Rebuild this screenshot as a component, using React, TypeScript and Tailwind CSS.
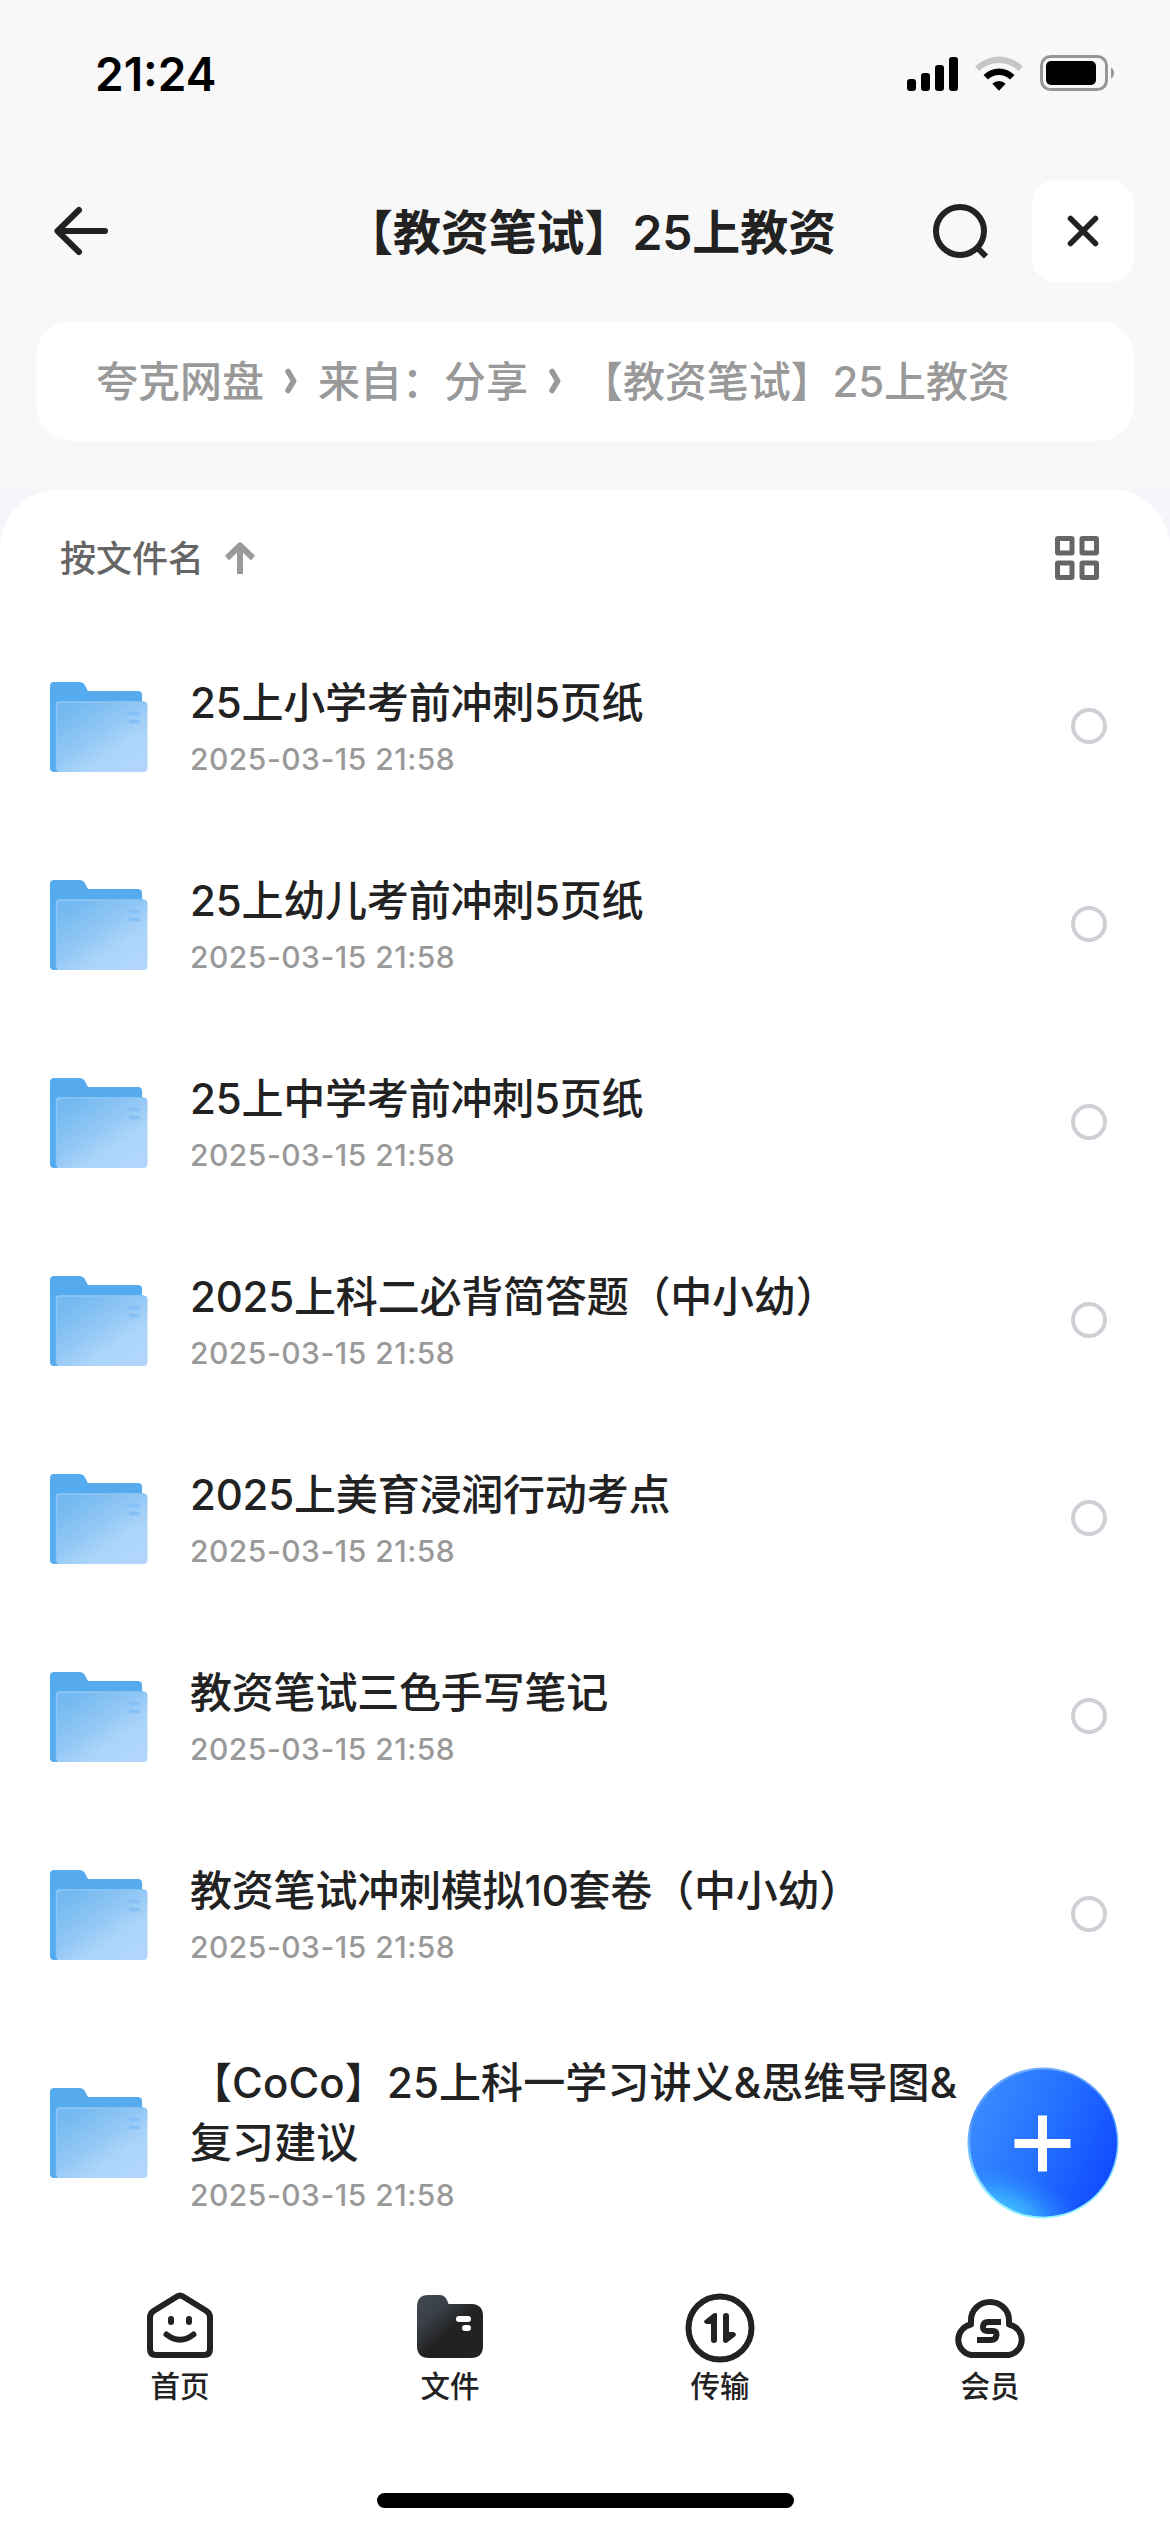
import type { ReactNode } from 'react';

const files = [
  { name: '25上小学考前冲刺5页纸', date: '2025-03-15 21:58' },
  { name: '25上幼儿考前冲刺5页纸', date: '2025-03-15 21:58' },
  { name: '25上中学考前冲刺5页纸', date: '2025-03-15 21:58' },
  { name: '2025上科二必背简答题（中小幼）', date: '2025-03-15 21:58' },
  { name: '2025上美育浸润行动考点', date: '2025-03-15 21:58' },
  { name: '教资笔试三色手写笔记', date: '2025-03-15 21:58' },
  { name: '教资笔试冲刺模拟10套卷（中小幼）', date: '2025-03-15 21:58' },
  { name: '【CoCo】25上科一学习讲义&思维导图&复习建议', date: '2025-03-15 21:58', tall: true },
];

function StatusBar() {
  return (
    <div className="flex h-[150px] items-start justify-between pt-[46px] pl-[95px] pr-[54px]">
      <span className="text-[46px] leading-[56px] font-semibold text-black">21:24</span>
      <div className="flex items-center pt-[9px]">
        <svg width="51" height="36" viewBox="0 0 51 36">
          <rect x="0" y="24" width="9" height="12" rx="3" />
          <rect x="14" y="18" width="9" height="18" rx="3" />
          <rect x="28" y="10" width="9" height="26" rx="3" />
          <rect x="42" y="2" width="9" height="34" rx="3" />
        </svg>
        <svg className="ml-[17px]" width="48" height="36" viewBox="0 0 48 36">
          <path d="M0 11.5 A34 34 0 0 1 48 11.5 L43.5 16 A27.5 27.5 0 0 0 4.5 16 Z" fill="#c6c6c6" />
          <path d="M8.5 20 A22 22 0 0 1 39.5 20 L35 24.5 A15.7 15.7 0 0 0 13 24.5 Z" />
          <path d="M17.3 28.7 A9.5 9.5 0 0 1 30.7 28.7 L24 35.7 Z" />
        </svg>
        <svg className="ml-[17px]" width="76" height="36" viewBox="0 0 76 36">
          <rect x="1.5" y="1.5" width="65" height="33" rx="9" fill="none" stroke="#979797" strokeWidth="3" />
          <rect x="6" y="6" width="50" height="24" rx="5" />
          <path d="M71 12.5 a6.5 6.5 0 0 1 0 11 Z" fill="#979797" />
        </svg>
      </div>
    </div>
  );
}

function Header() {
  return (
    <header className="flex h-[162px] items-center pl-[51px] pr-[36px]">
      <svg width="60" height="60" viewBox="0 0 60 60" fill="none" stroke="#222" strokeWidth="6" strokeLinecap="round" strokeLinejoin="round">
        <path d="M54 30 H7 M28 9 L6.5 30 L28 51" />
      </svg>
      <h1 className="ml-[234px] w-[520px] pt-[3px] text-[48px] leading-[60px] font-semibold tracking-[-0.1px] whitespace-nowrap text-[#222]">
        【教资笔试】25上教资
      </h1>
      <svg className="ml-[62px]" width="66" height="66" viewBox="0 0 66 66" fill="none" stroke="#222" strokeWidth="6">
        <circle cx="33" cy="33" r="24" />
        <path d="M50 49.5 L59 58.5" />
      </svg>
      <button className="ml-auto flex h-[102px] w-[102px] items-center justify-center rounded-[24px] bg-white">
        <svg width="36" height="36" viewBox="0 0 36 36" stroke="#222" strokeWidth="5.5" strokeLinecap="round">
          <path d="M5.500 5.500 L30.500 30.500 M30.500 5.500 L5.500 30.500" />
        </svg>
      </button>
    </header>
  );
}

function Chevron({ className }: { className: string }) {
  return (
    <svg className={className} width="12" height="26" viewBox="0 0 12 26" fill="none" stroke="#999" strokeWidth="5.5" strokeLinecap="round" strokeLinejoin="round">
      <path d="M3 3.5 L8.7 13 L3 22.5" />
    </svg>
  );
}

function Breadcrumb() {
  return (
    <nav className="mx-[36px] mt-[9px] flex h-[120px] items-center rounded-[36px] bg-white pl-[60px] text-[42px] leading-[60px] font-medium whitespace-nowrap text-[#999]">
      <span className="pt-[2px]">夸克网盘</span>
      <Chevron className="ml-[21px]" />
      <span className="ml-[21px] pt-[2px]">来自：分享</span>
      <Chevron className="ml-[21px]" />
      <span className="ml-[20px] pt-[2px] tracking-[-0.1px]">【教资笔试】25上教资</span>
    </nav>
  );
}

function FolderIcon() {
  return (
    <svg className="shrink-0" width="98" height="90" viewBox="0 0 98 90">
      <defs>
        <linearGradient id="front" x1="0.15" y1="0.1" x2="0.85" y2="0.9">
          <stop offset="0" stopColor="#74b9f0" />
          <stop offset="0.45" stopColor="#93c8f5" />
          <stop offset="0.75" stopColor="#add5fa" />
          <stop offset="1" stopColor="#b0d6fb" />
        </linearGradient>
      </defs>
      <path d="M0 4 Q0 0 4 0 H30 Q33 0 34.5 2.5 L38 9 H88 Q92 9 92 13 V50 H8 V90 H4 Q0 90 0 86 Z" fill="#55abee" />
      <rect x="6" y="19.5" width="91.5" height="70.5" rx="4" fill="url(#front)" />
      <path d="M6.5 88 V23 Q6.5 20 9.5 20 H94" fill="none" stroke="#8dc6f5" strokeWidth="1.5" />
      <path d="M79 31.5 H89.5 M79 39.5 H89.5" stroke="#84c0f6" strokeWidth="3.5" />
    </svg>
  );
}

function FileRow({ name, date, tall }: { name: string; date: string; tall?: boolean }) {
  return (
    <li className={tall ? 'flex h-[238px] items-center pl-[50px] pr-[63px]' : 'flex h-[198px] items-center pl-[50px] pr-[63px]'}>
      <FolderIcon />
      <div className={tall ? 'ml-[42px] w-[780px] pt-[3px]' : 'ml-[42px] w-[780px]'}>
        <p className={tall ? 'text-[42px] leading-[60px] font-medium tracking-[0.1px] text-[#222]' : 'text-[42px] leading-[60px] font-medium tracking-[-0.2px] text-[#222]'}>
          {name}
        </p>
        <p className={tall ? 'text-[30px] leading-[44px] font-medium tracking-[0.5px] text-[#999]' : 'mt-[4px] text-[30px] leading-[44px] font-medium tracking-[0.5px] text-[#999]'}>
          {date}
        </p>
      </div>
      <span className="mb-[2px] ml-auto h-[36px] w-[36px] rounded-full border-4 border-[#d0cfd6]" />
    </li>
  );
}

function Tab({ label, children }: { label: string; children: ReactNode }) {
  return (
    <div className="flex w-[270px] flex-col items-center">
      <svg width="72" height="72" viewBox="0 0 72 72" fill="none" stroke="#222" strokeWidth="6" strokeLinecap="round" strokeLinejoin="round">
        {children}
      </svg>
      <span className="mt-[1px] text-[29.5px] leading-[44px] font-medium text-[#222]">{label}</span>
    </div>
  );
}

function TabBar() {
  return (
    <nav className="flex px-[45px] pt-[3px]">
      <Tab label="首页">
        <path d="M33 5.5 Q36 3.5 39 5.5 L62.5 20 Q66 22.3 66 26.500 V58 Q66 64 60 64 H12 Q6 64 6 58 V26.500 Q6 22.300 9.500 20 Z" />
        <path d="M27 28 V31 M45 28 V31 M22.500 43.500 Q36 54 49.500 43.500" />
      </Tab>
      <Tab label="文件">
        <defs>
          <linearGradient id="tab-folder" gradientUnits="userSpaceOnUse" x1="10" y1="10" x2="36" y2="40">
            <stop offset="0" stopColor="#3f4650" />
            <stop offset="0.4" stopColor="#3a4048" />
            <stop offset="1" stopColor="#222" />
          </linearGradient>
        </defs>
        <path d="M3 16 Q3 4 14 4 H26 Q32 4 34.500 13 H58 Q69 13.500 69 25 V55 Q69 67 57 67 H15 Q3 67 3 55 Z" fill="url(#tab-folder)" stroke="none" />
        <path d="M45 28 H54 M51 37 H54" stroke="#fff" />
      </Tab>
      <Tab label="传输">
        <circle cx="36" cy="37" r="31.5" />
        <path d="M27.500 24 Q30 21 33 22.500 V49 Q33 52 30 52 Q27 52 27 49 V33 H22.500 Q19 31.500 20.500 29.500 Z" fill="#222" stroke="none" />
        <path d="M39 25 Q39 22 42 22 Q45 22 45 25 V41 H49.500 Q53 42.500 51.500 45 L43 51.500 Q40 53 39 50 Z" fill="#222" stroke="none" />
      </Tab>
      <Tab label="会员">
        <path d="M17 33.500 V29 A19 18 0 0 1 55 29 V33.500 A15.500 15.500 0 0 1 55 64 H17 A15.500 15.500 0 0 1 17 33.500 Z" />
        <path d="M47 31 H34 Q29.500 31 29 35.500 Q28.500 40 33 40 H39 Q43 40 42.500 44 Q42 49 37 49 H23" strokeLinecap="butt" />
      </Tab>
    </nav>
  );
}

function AddButton() {
  return (
    <button className="absolute top-[2067px] left-[967px] h-[152px] w-[152px]">
      <svg width="152" height="152" viewBox="0 0 152 152">
        <defs>
          <linearGradient id="fab" x1="0" y1="0.3" x2="1" y2="0.7">
            <stop offset="0" stopColor="#3a8bff" />
            <stop offset="0.5" stopColor="#2470ff" />
            <stop offset="1" stopColor="#104aff" />
          </linearGradient>
          <radialGradient id="fab-glow" cx="0" cy="0" r="1" gradientTransform="translate(0.24 0.98) rotate(22) scale(0.6 0.32)">
            <stop offset="0" stopColor="#45c8ff" />
            <stop offset="0.4" stopColor="#38aeff" stopOpacity="0.75" />
            <stop offset="1" stopColor="#2a80ff" stopOpacity="0" />
          </radialGradient>
          <linearGradient id="fab-rim" x1="0.4" y1="0" x2="0.45" y2="1">
            <stop offset="0" stopColor="#72aefb" />
            <stop offset="0.3" stopColor="#4b8fff" />
            <stop offset="0.7" stopColor="#8ae2fb" />
            <stop offset="1" stopColor="#90f4ff" />
          </linearGradient>
        </defs>
        <circle cx="76" cy="76" r="75.5" fill="url(#fab-rim)" />
        <circle cx="76.5" cy="76" r="73.5" fill="url(#fab)" />
        <circle cx="76.5" cy="76" r="73.5" fill="url(#fab-glow)" />
        <path d="M47.500 76.500 H103.500 M75.500 48.500 V104.500" stroke="#fff" strokeWidth="9" />
      </svg>
    </button>
  );
}

export default function App() {
  return (
    <div className="relative flex h-[2532px] w-[1170px] flex-col overflow-hidden bg-[#f8f8f8] font-['Inter','Noto_Sans_CJK_SC',sans-serif]">
      <StatusBar />
      <Header />
      <Breadcrumb />
      <div className="mt-[48px] flex-1 bg-[#f4f6f9]">
        <main className="flex h-full flex-col rounded-t-[60px] bg-white">
          <div className="flex h-[139px] items-start justify-between pt-[42px] pl-[60px] pr-[71px]">
            <div className="flex items-center text-[36px] leading-[52px] font-medium text-[#666]">
              <span className="pt-[2px]">按文件名</span>
              <svg className="ml-[20px]" width="32" height="34" viewBox="0 0 32 34" fill="none" stroke="#999" strokeWidth="6" strokeLinejoin="round">
                <path d="M16 33 V5 M3 17 L16 4.500 L29 17" />
              </svg>
            </div>
            <svg className="mt-[5px]" width="44" height="44" viewBox="0 0 44 44" fill="none" stroke="#666" strokeWidth="5">
              <rect x="2.5" y="2.5" width="14.5" height="14.5" rx="0.5" />
              <rect x="27" y="2.5" width="14.5" height="14.5" rx="0.5" />
              <rect x="2.5" y="27" width="14.5" height="14.5" rx="0.5" />
              <rect x="27" y="27" width="14.5" height="14.5" rx="0.5" />
            </svg>
          </div>
          <ul className="h-[1660px]">
            {files.map((file) => (
              <FileRow key={file.name} {...file} />
            ))}
          </ul>
          <TabBar />
          <div className="mt-auto mb-[24px] ml-[377px] h-[15px] w-[417px] rounded-full bg-black" />
        </main>
      </div>
      <AddButton />
    </div>
  );
}
